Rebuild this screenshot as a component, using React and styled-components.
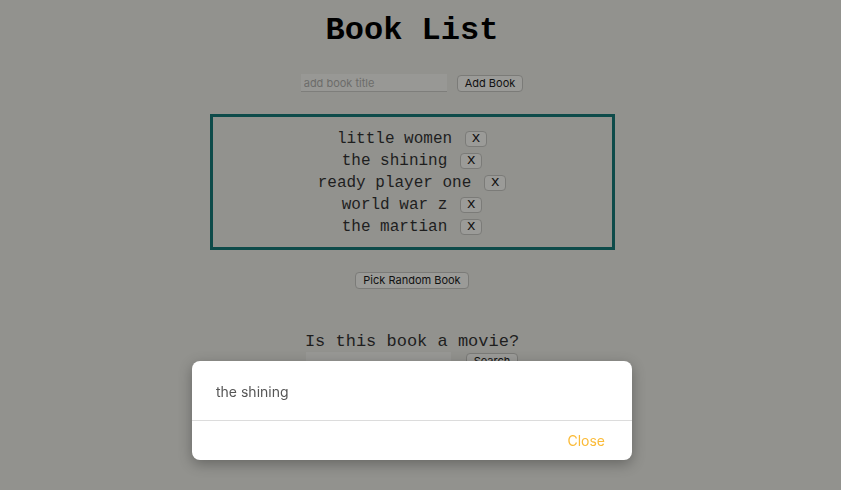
import React, { useState } from 'react'
import styled, { createGlobalStyle } from 'styled-components'

const GlobalStyle = createGlobalStyle`
  html, body {
    margin: 0;
    padding: 0;
    background-color: #92928e;
  }
  body {
    font-family: 'Liberation Mono', 'Courier New', monospace;
    color: #111;
  }
`

const Page = styled.div`
  width: 824px;
  height: 490px;
  display: flex;
  flex-direction: column;
  align-items: center;
`

const Title = styled.h1`
  font-family: 'Liberation Mono', 'Courier New', monospace;
  font-weight: 700;
  font-size: 32px;
  line-height: 36px;
  margin: 13px 0 0;
  color: #000;
`

const FormRow = styled.div`
  display: flex;
  align-items: center;
  gap: ${(p) => p.gap || 10}px;
  margin-top: ${(p) => p.top}px;
`

const TextInput = styled.input`
  box-sizing: border-box;
  width: ${(p) => p.width || 146}px;
  height: 18px;
  padding: 0 3px;
  border: none;
  border-bottom: 1px solid #7e7e7b;
  background-color: #989895;
  font-family: Inter, 'Liberation Sans', sans-serif;
  font-size: 11px;
  color: #222;
  &::placeholder {
    color: #6c6c6a;
  }
`

const Button = styled.button`
  box-sizing: border-box;
  height: 17px;
  padding: 0 7px;
  border: 1px solid #7b7b78;
  border-radius: 4px;
  background-color: #9b9b98;
  font-family: Inter, 'Liberation Sans', sans-serif;
  font-size: 11px;
  line-height: 15px;
  color: #111;
`

const RemoveButton = styled(Button)`
  width: 22px;
  height: 16px;
  padding: 0;
  font-family: 'Liberation Mono', 'Courier New', monospace;
  font-size: 15px;
  line-height: 12px;
`

const BookBox = styled.ul`
  box-sizing: border-box;
  width: 405px;
  margin: 22px 0 0;
  padding: 11px 0 9px;
  list-style: none;
  border: 3px solid #0e4b4a;
`

const BookRow = styled.li`
  display: flex;
  justify-content: center;
  align-items: center;
  gap: 13px;
  height: 22px;
  font-size: 16px;
  color: #1e1e1e;
`

const MovieHeading = styled.h3`
  font-family: 'Liberation Mono', 'Courier New', monospace;
  font-weight: 400;
  font-size: 17px;
  line-height: 20px;
  margin: 43px 0 0;
  color: #1e1e1e;
`

const Backdrop = styled.div`
  position: fixed;
  inset: 0;
  display: flex;
  align-items: flex-end;
  justify-content: center;
  padding: 0 17px 30px 0;
  box-sizing: border-box;
`

const Modal = styled.div`
  width: 440px;
  background-color: #fff;
  border-radius: 8px;
  box-shadow: 0 4px 14px rgba(0, 0, 0, 0.3);
  font-family: Inter, 'Liberation Sans', sans-serif;
`

const ModalBody = styled.div`
  height: 60px;
  padding: 1px 24px 0;
  box-sizing: border-box;
  display: flex;
  align-items: center;
  font-size: 14px;
  color: #555;
  border-bottom: 1px solid #dcdcdc;
`

const ModalFooter = styled.div`
  height: 39px;
  padding: 0 27px 1px;
  box-sizing: border-box;
  display: flex;
  align-items: center;
  justify-content: flex-end;
`

const CloseLink = styled.span`
  font-size: 14px;
  color: #fbbb38;
  cursor: pointer;
`

const books = ['little women', 'the shining', 'ready player one', 'world war z', 'the martian']

const App = () => {
  const [open, setOpen] = useState(true)
  return (
    <>
      <GlobalStyle />
      <Page>
        <Title>Book List</Title>
        <FormRow top={25}>
          <TextInput placeholder="add book title" />
          <Button>Add Book</Button>
        </FormRow>
        <BookBox>
          {books.map((b) => (
            <BookRow key={b}>
              <span>{b}</span>
              <RemoveButton>x</RemoveButton>
            </BookRow>
          ))}
        </BookBox>
        <FormRow top={22}>
          <Button>Pick Random Book</Button>
        </FormRow>
        <MovieHeading>Is this book a movie?</MovieHeading>
        <FormRow top={0} gap={15}>
          <TextInput width={145} />
          <Button>Search</Button>
        </FormRow>
      </Page>
      {open && (
        <Backdrop>
          <Modal>
            <ModalBody>the shining</ModalBody>
            <ModalFooter>
              <CloseLink onClick={() => setOpen(false)}>Close</CloseLink>
            </ModalFooter>
          </Modal>
        </Backdrop>
      )}
    </>
  )
}

export default App
